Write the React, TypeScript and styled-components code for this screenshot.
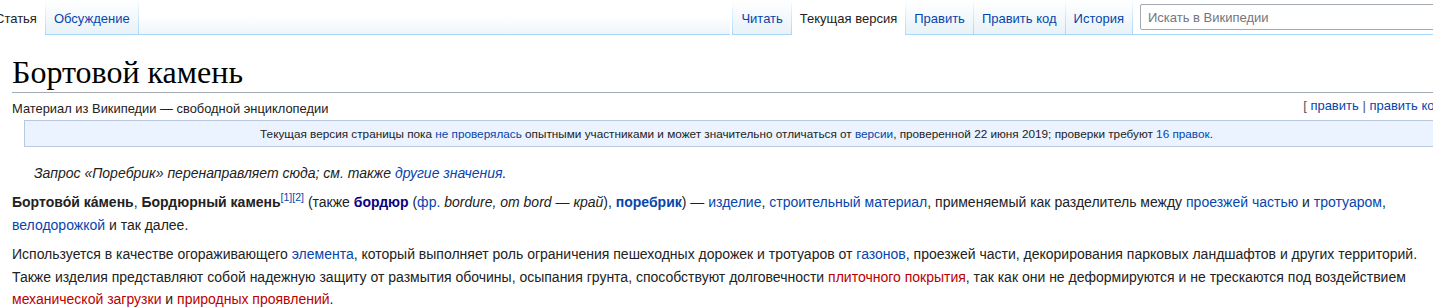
import React from "react";
import styled, { createGlobalStyle, css } from "styled-components";

const GlobalStyle = createGlobalStyle`
  html, body {
    margin: 0;
    padding: 0;
    background: #fff;
    overflow: hidden;
  }
  body {
    font-family: "Liberation Sans", Arial, sans-serif;
    color: #222;
  }
`;

const Page = styled.div`
  width: 1470px;
`;

const Head = styled.header`
  display: flex;
  height: 35px;
  margin-left: -13px;
`;

const TabGroup = styled.nav`
  display: flex;
`;

const Tab = styled.a<{ $selected?: boolean }>`
  display: block;
  box-sizing: border-box;
  height: 35px;
  padding: 12px 8px 0;
  font-size: 13px;
  line-height: 14px;
  color: #0645ad;
  text-decoration: none;
  white-space: nowrap;
  border-right: 1px solid;
  border-image: linear-gradient(to bottom, rgba(167, 215, 249, 0) 0, #a7d7f9 100%) 1;
  background: linear-gradient(to top, #a7d7f9 0, #a7d7f9 1px, #e8f2f8 1px, #fff 100%);
  ${(p) =>
    p.$selected &&
    css`
      color: #222;
      background: #fff;
    `}
`;

const FirstSep = styled.span`
  width: 1px;
  margin-left: 2px;
  background: linear-gradient(to bottom, rgba(167, 215, 249, 0) 0, #a7d7f9 100%);
`;

const Gap = styled.div`
  flex: 1;
  box-sizing: border-box;
  border-bottom: 1px solid #a7d7f9;
  background: linear-gradient(to bottom, #fff 45%, #eef5fa 100%);
`;

const SearchWrap = styled.div`
  box-sizing: border-box;
  padding: 4px 0 0 7px;
  border-bottom: 1px solid #a7d7f9;
`;

const SearchInput = styled.input`
  box-sizing: border-box;
  width: 330px;
  height: 26px;
  padding: 0 7px;
  border: 1px solid #a2a9b1;
  border-radius: 2px;
  font-family: "Liberation Sans", Arial, sans-serif;
  font-size: 13px;
  color: #222;
  outline: none;
  &::placeholder {
    color: #72777d;
  }
`;

const Content = styled.main`
  width: 1437px;
  padding-left: 12px;
`;

const Title = styled.h1`
  margin: 17px 0 0;
  padding: 0;
  font-family: "Liberation Serif", "Times New Roman", serif;
  font-weight: normal;
  font-size: 32px;
  line-height: 40px;
  color: #000;
  border-bottom: 1px solid #a2a9b1;
`;

const SubRow = styled.div`
  display: flex;
  justify-content: space-between;
  align-items: flex-start;
  margin-top: 6px;
`;

const SiteSub = styled.div`
  font-size: 12.9px;
  line-height: 20px;
  color: #222;
`;

const EditSection = styled.div`
  margin-top: -3px;
  font-size: 13px;
  line-height: 20px;
  color: #54595d;
  white-space: nowrap;
`;

const Notice = styled.div`
  margin: 1px 0 0 12px;
  padding: 5px 8px;
  border: 1px solid #b9c8de;
  background: #eaf3ff;
  font-size: 11.75px;
  line-height: 15px;
  text-align: center;
  color: #222;
`;

const Hatnote = styled.div`
  margin-top: 15px;
  padding-left: 22px;
  font-size: 14px;
  line-height: 22.4px;
  font-style: italic;
`;

const Para = styled.p`
  margin: 7px 0 0;
  font-size: 14px;
  line-height: 22.4px;
`;

const Link = styled.a<{ $tone?: "blue" | "visited" | "new"; $bold?: boolean }>`
  color: ${(p) => (p.$tone === "visited" ? "#0b0080" : p.$tone === "new" ? "#ba0000" : "#0645ad")};
  font-weight: ${(p) => (p.$bold ? "bold" : "inherit")};
  text-decoration: none;
`;

const Sup = styled.sup`
  font-size: 75%;
  line-height: 1;
`;

const tabsLeft = [
  { label: "Статья", selected: true },
  { label: "Обсуждение" },
];

const tabsRight = [
  { label: "Читать" },
  { label: "Текущая версия", selected: true },
  { label: "Править" },
  { label: "Править код" },
  { label: "История" },
];

export default function App() {
  return (
    <Page>
      <GlobalStyle />
      <Head>
        <TabGroup>
          {tabsLeft.map((t) => (
            <Tab key={t.label} $selected={t.selected}>
              {t.label}
            </Tab>
          ))}
        </TabGroup>
        <Gap />
        <TabGroup>
          <FirstSep />
          {tabsRight.map((t) => (
            <Tab key={t.label} $selected={t.selected}>
              {t.label}
            </Tab>
          ))}
        </TabGroup>
        <SearchWrap>
          <SearchInput placeholder="Искать в Википедии" />
        </SearchWrap>
      </Head>

      <Content>
        <Title>Бортовой камень</Title>
        <SubRow>
          <SiteSub>Материал из Википедии — свободной энциклопедии</SiteSub>
          <EditSection>
            [ <Link>править</Link> | <Link>править код</Link> ]
          </EditSection>
        </SubRow>
        <Notice>
          Текущая версия страницы пока <Link>не проверялась</Link> опытными участниками и может значительно
          отличаться от <Link>версии</Link>, проверенной 22 июня 2019; проверки требуют <Link>16 правок</Link>.
        </Notice>
        <Hatnote>
          Запрос «Поребрик» перенаправляет сюда; см. также <Link>другие значения</Link>.
        </Hatnote>
        <Para>
          <b>Бортово{"\u0301"}й ка{"\u0301"}мень</b>, <b>Бордюрный камень</b>
          <Sup>
            <Link>[1]</Link>
            <Link>[2]</Link>
          </Sup>{" "}
          (также <Link $bold $tone="visited">бордюр</Link> (<Link>фр.</Link> <i>bordure, от bord — край</i>),{" "}
          <Link $bold>поребрик</Link>) — <Link>изделие</Link>, <Link>строительный материал</Link>, применяемый как
          разделитель между <Link>проезжей частью</Link> и <Link>тротуаром</Link>, <Link>велодорожкой</Link> и так
          далее.
        </Para>
        <Para>
          Используется в качестве огораживающего <Link>элемента</Link>, который выполняет роль ограничения
          пешеходных дорожек и тротуаров от <Link>газонов</Link>, проезжей части, декорирования парковых
          ландшафтов и других территорий. Также изделия представляют собой надежную защиту от размытия обочины,
          осыпания грунта, способствуют долговечности <Link $tone="new">плиточного покрытия</Link>, так как они не
          деформируются и не трескаются под воздействием <Link $tone="new">механической загрузки</Link> и{" "}
          <Link $tone="new">природных проявлений</Link>.
        </Para>
      </Content>
    </Page>
  );
}
